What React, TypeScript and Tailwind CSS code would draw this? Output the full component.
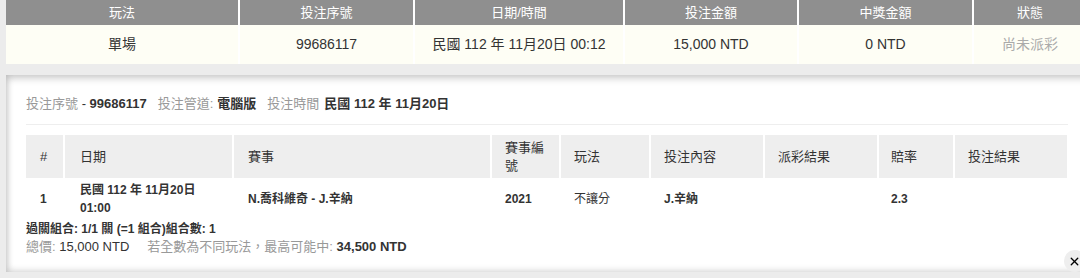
import { X } from "lucide-react";

const font = { fontFamily: '"Liberation Sans", "Noto Sans CJK TC", sans-serif' };

// summary strip across the top of the ticket
const summaryHead = ["玩法", "投注序號", "日期/時間", "投注金額", "中獎金額", "狀態"];

export default function App() {
  return (
    <div lang="zh-Hant-TW" className="relative w-[1080px] h-[278px] overflow-hidden bg-[#ececec] text-[#333]" style={font}>
      <div className="pl-[6px]">
        <div className="grid grid-cols-[232px_173px_208px_172px_173px_112px] gap-x-[2px] w-max bg-white">
          {summaryHead.map((h) => (
            <div key={h} className="h-[25px] bg-[#8f8f8f] text-white text-[13px] flex items-center justify-center">
              {h}
            </div>
          ))}
          <div className="h-[39px] bg-[#fefef5] text-[14px] flex items-center justify-center">單場</div>
          <div className="h-[39px] bg-[#fefef5] text-[14px] flex items-center justify-center">99686117</div>
          <div className="h-[39px] bg-[#fefef5] text-[14px] flex items-center justify-center">民國 112 年 11月20日 00:12</div>
          <div className="h-[39px] bg-[#fefef5] text-[14px] flex items-center justify-center">15,000 NTD</div>
          <div className="h-[39px] bg-[#fefef5] text-[14px] flex items-center justify-center">0 NTD</div>
          <div className="h-[39px] bg-[#fefef5] text-[14px] text-[#aaa] flex items-center justify-center">尚未派彩</div>
        </div>
      </div>

      <div className="mt-[11px] ml-[6px] w-[1090px] h-[197px] bg-white shadow-[inset_0_4px_7px_rgba(0,0,0,0.16),inset_3px_0_6px_rgba(0,0,0,0.08),inset_0_-3px_6px_rgba(0,0,0,0.08)] pt-[20px] pl-[20px]">
        <div className="w-[1042px]">
          <div className="text-[13px] leading-[18px] pb-[11px] border-b border-[#eeeeee]">
            <span className="text-[#999]">投注序號</span>
            <span> - </span>
            <span className="font-bold">99686117</span>
            <span className="text-[#999] ml-[11px]">投注管道:</span>
            <span className="font-bold ml-[4px]">電腦版</span>
            <span className="text-[#999] ml-[11px]">投注時間</span>
            <span className="font-bold ml-[5px]">民國 112 年 11月20日</span>
          </div>

          <div className="mt-[10px] grid grid-cols-[37px_167px_256px_67px_88px_112px_112px_74px_112px] gap-x-[2px] text-[12px]">
            <div className="h-[43px] bg-[#eeeeee] flex items-center pl-[14px] text-[13px]">#</div>
            <div className="h-[43px] bg-[#eeeeee] flex items-center pl-[15px] text-[13px]">日期</div>
            <div className="h-[43px] bg-[#eeeeee] flex items-center pl-[14px] text-[13px]">賽事</div>
            <div className="h-[43px] bg-[#eeeeee] flex items-center pl-[13px] pr-[12px] leading-[18px] text-[13px]">賽事編號</div>
            <div className="h-[43px] bg-[#eeeeee] flex items-center pl-[13px] text-[13px]">玩法</div>
            <div className="h-[43px] bg-[#eeeeee] flex items-center pl-[13px] text-[13px]">投注內容</div>
            <div className="h-[43px] bg-[#eeeeee] flex items-center pl-[13px] text-[13px]">派彩結果</div>
            <div className="h-[43px] bg-[#eeeeee] flex items-center pl-[12px] text-[13px]">賠率</div>
            <div className="h-[43px] bg-[#eeeeee] flex items-center pl-[13px] text-[13px]">投注結果</div>

            <div className="py-[3px] flex items-center pl-[14px] font-bold">1</div>
            <div className="py-[3px] pl-[15px] font-bold leading-[18px]">
              <div>民國 112 年 11月20日</div>
              <div>01:00</div>
            </div>
            <div className="py-[3px] flex items-center pl-[14px] font-bold">N.喬科維奇 - J.辛納</div>
            <div className="py-[3px] flex items-center pl-[13px] font-bold">2021</div>
            <div className="py-[3px] flex items-center pl-[13px]">不讓分</div>
            <div className="py-[3px] flex items-center pl-[13px] font-bold">J.辛納</div>
            <div className="py-[3px]" />
            <div className="py-[3px] flex items-center pl-[12px] font-bold">2.3</div>
            <div className="py-[3px]" />
          </div>

          <div className="leading-[17px] mt-[1px]">
            <div className="font-bold text-[12px]">過關組合: 1/1 關 (=1 組合)組合數: 1</div>
            <div className="text-[13px]">
              <span className="text-[#999]">總價: </span>
              <span>15,000 NTD</span>
              <span className="text-[#999] ml-[18px]">若全數為不同玩法，最高可能中: </span>
              <span className="font-bold">34,500 NTD</span>
            </div>
          </div>
        </div>
      </div>

      <button className="absolute left-[1064px] top-[250px] w-[22px] h-[22px] rounded-full bg-[#eeeeee] flex items-center justify-center">
        <X size={13} strokeWidth={2.5} className="text-black -ml-[1px]" />
      </button>
    </div>
  );
}
